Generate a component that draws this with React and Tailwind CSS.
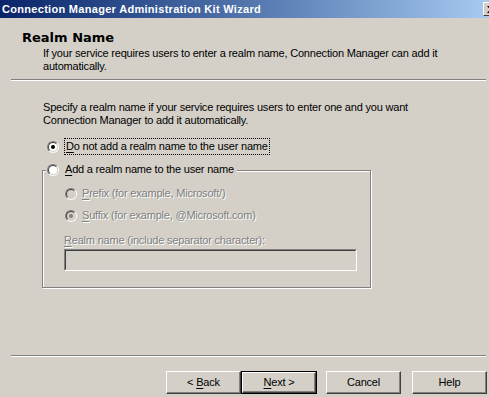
const Radio = ({ checked, disabled }) => (
  <span className="flex h-[12px] w-[12px] shrink-0 rounded-full border border-t-[#808080] border-l-[#808080] border-r-white border-b-white">
    <span
      className={`flex h-full w-full items-center justify-center rounded-full border border-t-[#404040] border-l-[#404040] border-r-[#d4d0c8] border-b-[#d4d0c8] ${
        disabled ? "bg-[#d4d0c8]" : "bg-white"
      }`}
    >
      {checked && (
        <span className={`h-[4px] w-[4px] rounded-full ${disabled ? "bg-[#808080]" : "bg-black"}`} />
      )}
    </span>
  </span>
);

const Key = ({ children }) => <span className="underline underline-offset-[2px]">{children}</span>;

const Btn = ({ children, isDefault }) => {
  const face = (
    <div className="flex h-full w-full items-center justify-center border border-t-white border-l-white border-r-[#404040] border-b-[#404040] shadow-[inset_-1px_-1px_0_#808080]">
      <span>{children}</span>
    </div>
  );
  return isDefault ? (
    <div className="h-[23px] w-[76px] border border-black">{face}</div>
  ) : (
    <div className="h-[23px] w-[75px]">{face}</div>
  );
};

const Separator = () => (
  <div className="ml-[11px] mr-[3px] h-[2px] border-t border-t-[#808080] border-b border-b-white" />
);

export default function App() {
  return (
    <div className="flex h-[397px] w-[489px] flex-col overflow-hidden bg-[#d4d0c8] font-['Liberation_Sans',Arial,sans-serif] text-[11px] leading-[13px] tracking-[-0.2px] text-black">
      {/* title bar */}
      <div className="flex h-[18px] shrink-0 items-center overflow-hidden bg-gradient-to-r from-[#0a246a] to-[#a6caf0]">
        <span className="pl-[2px] text-[11px] font-bold tracking-[0.3px] text-white">
          Connection Manager Administration Kit Wizard
        </span>
        <div className="ml-auto -mr-[10px] flex h-[14px] w-[16px] shrink-0 items-center justify-center border border-t-white border-l-white border-r-[#404040] border-b-[#404040] bg-[#d4d0c8]">
          <svg width="8" height="7" viewBox="0 0 8 7">
            <path d="M0 0h2l2 2.5L6 0h2L5 3.5 8 7H6L4 4.5 2 7H0l3-3.5z" fill="black" />
          </svg>
        </div>
      </div>

      {/* header */}
      <div className="mt-[12px] pl-[22px] font-['DejaVu_Sans',Verdana,sans-serif] text-[13px] font-bold leading-[16px] tracking-normal">
        Realm Name
      </div>
      <p className="mt-[1px] pl-[43px] pr-[40px]">
        If your service requires users to enter a realm name, Connection Manager can add it automatically.
      </p>
      <div className="mt-[6px]">
        <Separator />
      </div>

      {/* body */}
      <p className="mt-[20px] pl-[43px] pr-[30px]">
        Specify a realm name if your service requires users to enter one and you want Connection Manager to
        add it automatically.
      </p>

      <div className="mt-[11px] flex h-[17px] items-center pl-[47px]">
        <Radio checked />
        <span className="ml-[5px] border border-dotted border-black px-[1px] leading-[15px]">
          <Key>D</Key>o not add a realm name to the user name
        </span>
      </div>

      <div className="mt-[6px] ml-[42px] w-[330px]">
        <div className="relative z-10 ml-[4px] flex h-[17px] w-fit items-center bg-[#d4d0c8] pl-[1px] pr-[3px]">
          <Radio />
          <span className="ml-[6px]">
            <Key>A</Key>dd a realm name to the user name
          </span>
        </div>
        <div className="-mt-[8px] h-[118px] w-[329px] border border-[#808080] pl-[21px] pt-[14px] text-[#808080] shadow-[inset_1px_1px_0_#fff,1px_1px_0_#fff] [text-shadow:1px_1px_0_#fff]">
          <div className="flex h-[17px] items-center pl-[1px]">
            <Radio disabled />
            <span className="ml-[5px]">
              <Key>P</Key>refix (for example, Microsoft/)
            </span>
          </div>
          <div className="mt-[5px] flex h-[17px] items-center pl-[1px]">
            <Radio checked disabled />
            <span className="ml-[5px]">
              <Key>S</Key>uffix (for example, @Microsoft.com)
            </span>
          </div>
          <div className="mt-[10px]">
            <Key>R</Key>ealm name (include separator character):
          </div>
          <div className="mt-[2px] h-[22px] w-[293px] border border-t-[#808080] border-l-[#808080] border-r-white border-b-white">
            <div className="h-full w-full border border-t-[#404040] border-l-[#404040] border-r-[#d4d0c8] border-b-[#d4d0c8] bg-[#d4d0c8]" />
          </div>
        </div>
      </div>

      {/* footer */}
      <div className="mt-[67px]">
        <Separator />
      </div>
      <div className="mt-[14px] flex pl-[166px]">
        <Btn>
          {"< "}
          <Key>B</Key>ack
        </Btn>
        <Btn isDefault>
          <Key>N</Key>
          {"ext >"}
        </Btn>
        <div className="ml-[9px]">
          <Btn>Cancel</Btn>
        </div>
        <div className="ml-[11px]">
          <Btn>Help</Btn>
        </div>
      </div>
    </div>
  );
}
